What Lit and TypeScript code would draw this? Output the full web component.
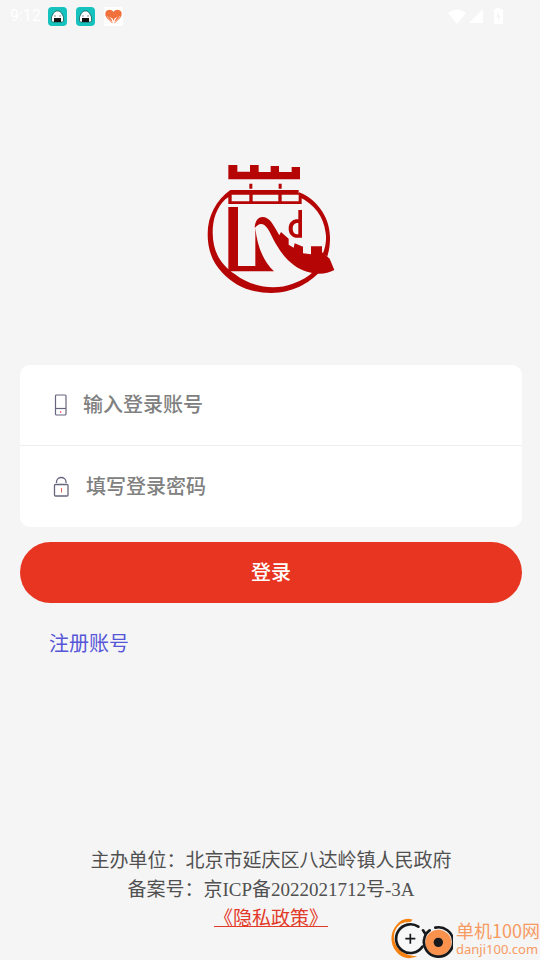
import { LitElement, html, css, svg } from "lit";
import { customElement } from "lit/decorators.js";

const riceBall = svg`
  <rect width="19" height="19" rx="4" fill="#16c2bd"/>
  <path d="M3.500 14V10L5.500 6 8 4H11L13.500 6 15.500 10V14L14.500 15H4.500Z" fill="#fff" stroke="#1c5a59" stroke-width=".8"/>
  <path d="M6 11H13V15H6Z" fill="#111"/>
  <path d="M6.500 8.500h1v1h-1zM11.500 8.500h1v1h-1z" fill="#222"/>`;

@customElement("status-bar")
class StatusBar extends LitElement {
  static styles = css`
    :host {
      display: flex;
      align-items: center;
      gap: 9px;
      height: 32px;
      padding: 0 34px 0 10px;
      color: #fff;
      font: 16px/20px Roboto, "Noto Sans", sans-serif;
    }
    .time { width: 29px; white-space: nowrap; }
    .space { flex: 1; }
    svg { display: block; flex: none; }
  `;
  render() {
    return html`
      <span class="time">9:12</span>
      <svg width="19" height="19" viewBox="0 0 19 19">${riceBall}</svg>
      <svg width="19" height="19" viewBox="0 0 19 19">${riceBall}</svg>
      <svg width="19" height="19" viewBox="0 0 19 19">
        <rect width="19" height="19" rx="2" fill="#fff"/>
        <path d="M9.500 5C8 2 2.500 2 1.500 5.500C.7 9 3 11.500 5 13L8.500 16.500C8.500 13 7 11 5 9.500L8.500 11.500 9.500 14 10.500 11.500 14 9.500C12 11 10.500 13 10.500 16.500L14 13C16 11.500 18.300 9 17.500 5.500C16.500 2 11 2 9.500 5Z" fill="#f2703c"/>
        <path d="M3 9C4 12 7 12.500 8 15.500M16 9C15 12 12 12.500 11 15.500" fill="none" stroke="#fbd3bf" stroke-width=".8"/>
      </svg>
      <span class="space"></span>
      <svg width="58" height="19" viewBox="0 0 58 19" fill="#fff">
        <path d="M0 6Q9-1 18 6L9 17Z"/>
        <path d="M21 16 35 2V16Z"/>
        <path fill-rule="evenodd" d="M46 2H48V1H52V2H55V17H46ZM51 5 48 10H50V14L53 9H51Z"/>
      </svg>`;
  }
}

@customElement("brand-logo")
class BrandLogo extends LitElement {
  static styles = css`
    :host { display: block; }
    svg { display: block; width: 144px; height: 144px; }
  `;
  render() {
    return html`
      <svg viewBox="-3 0 432 432" fill="#b50505" role="img" aria-label="Logo">
        <path d="M85 27H112V47H150V27H176V48H212V30H237V48H275V33H300V70H85Z"/>
        <path d="M148 83H157V98H148ZM236 83H245V98H236Z"/>
        <path fill-rule="evenodd" d="M91 102H296V112L305 115V144H85V124L76 130C50 155 38 190 38 230C39 290 62 325 105 355C155 394 225 404 278 383C304 374 325 362 340 347L358 349C327 382 277 411 214 411C150 411 100 386 67 350C35 317 23 278 23 235C23 178 49 133 91 102ZM95 116V136H148V116ZM158 116V136H235V116ZM245 116V136H296V116Z"/>
        <path d="M297 109C346 127 390 180 390 244C390 269 387 286 382 301L368 294C377 271 380 252 377 231C371 180 342 144 297 123Z"/>
        <path d="M85 153H114V330H166V216C171 265 187 313 222 346H85Z"/>
        <path d="M164 216C165 196 173 183 188 183C207 183 218 202 234 231L238 238 243 228 266 248V266L281 275 284 262 309 272V292L333 295V271H366V289L381 301 389 308 403 342C380 355 349 356 321 347C285 337 253 307 232 271C217 248 208 218 193 207C182 200 172 206 164 216Z"/>
        <path fill-rule="evenodd" d="M295 162H306V245H287C273 242 266 231 266 218C266 203 275 192 288 190H295ZM295 201H290C281 203 278 209 278 218C278 227 282 233 290 235H295Z"/>
      </svg>`;
  }
}

@customElement("site-mark")
class SiteMark extends LitElement {
  static styles = css`
    :host {
      display: flex;
      align-items: center;
      gap: 3px;
      color: #f79a62;
      white-space: nowrap;
    }
    svg { display: block; width: 66px; height: 44px; }
    .words { display: flex; flex-direction: column; }
    .name { font: 18px/22px "Noto Sans CJK SC", sans-serif; }
    .domain { font: 13px/16px "Noto Sans", sans-serif; }
  `;
  render() {
    return html`
      <svg viewBox="0 0 198 132" fill="none" aria-hidden="true">
        <path d="M77 11C58 4 42 11 29 26C8 50 9 84 27 106C42 126 63 132 91 121C65 119 43 110 32 95C16 72 18 48 33 31C44 18 57 19 70 18Z" fill="#f78212"/>
        <circle cx="70" cy="68" r="42" fill="#f8f8f8"/>
        <path d="M94 32A43 43 0 1 0 106 92" stroke="#17191c" stroke-width="8" stroke-linecap="round"/>
        <path d="M70 53V83M55 68H85" stroke="#17191c" stroke-width="5"/>
        <circle cx="154" cy="80" r="39" fill="#fa924d"/>
        <path d="M145 35A44 44 0 1 1 112 67C114 57 119 49 128 43M108 43 116 55" stroke="#17191c" stroke-width="8" stroke-linecap="round"/>
        <circle cx="154" cy="79" r="14" fill="#17191c"/>
      </svg>
      <span class="words">
        <span class="name">单机100网</span>
        <span class="domain">danji100.com</span>
      </span>`;
  }
}

@customElement("app-root")
class AppRoot extends LitElement {
  static styles = css`
    :host {
      display: flex;
      flex-direction: column;
      position: relative;
      box-sizing: border-box;
      min-height: 100vh;
      background: #f5f5f5;
      font-family: "Liberation Serif", "Noto Sans CJK SC", serif;
      font-size: 20px;
      line-height: 30px;
    }
    .brand {
      display: flex;
      justify-content: center;
      padding: 124px 18px 65px 20px;
    }
    form { display: flex; flex-direction: column; padding: 0 18px 0 20px; }
    .card { background: #fff; border-radius: 10px; }
    .row {
      display: flex;
      align-items: center;
      gap: 14px;
      height: 80px;
      padding: 0 32px;
    }
    .row + .row { padding-top: 1px; border-top: 1px solid #eee; }
    .row svg { display: block; flex: none; }
    input {
      flex: 1;
      min-width: 0;
      padding: 0;
      border: 0;
      outline: 0;
      background: none;
      color: #333;
      font: inherit;
      font-weight: 500;
    }
    input::placeholder { color: #808080; opacity: 1; }
    button {
      height: 61px;
      margin-top: 15px;
      border: 0;
      border-radius: 31px;
      background: #e83522;
      color: #fff;
      font: inherit;
      font-weight: 500;
      cursor: pointer;
    }
    .register {
      align-self: flex-start;
      margin: 26px 0 0 29px;
      color: #5656d8;
      text-decoration: none;
    }
    footer {
      margin-top: auto;
      padding: 32px 18px 27px 20px;
      color: #505050;
      font-size: 19px;
      line-height: 29px;
      text-align: center;
    }
    p { margin: 0; }
    .policy { color: #e23a28; }
    site-mark { position: absolute; right: 0; bottom: 0; }
  `;
  render() {
    return html`
      <status-bar></status-bar>
      <div class="brand"><brand-logo></brand-logo></div>
      <form @submit=${(e: Event) => e.preventDefault()}>
        <div class="card">
          <label class="row">
            <svg width="17" height="24" viewBox="0 0 17 24" fill="none" stroke="#66667f">
              <rect x="3.500" y="2" width="10.500" height="20" rx="1" stroke-width="1.200"/>
              <path d="M3.500 15.500H14" stroke-width="1.200"/>
              <path d="M8.700 18V20" stroke="#f05070"/>
            </svg>
            <input type="text" placeholder="输入登录账号" aria-label="输入登录账号">
          </label>
          <label class="row">
            <svg width="20" height="24" viewBox="0 0 20 24" fill="none" stroke="#66667f">
              <rect x="2.500" y="9.500" width="13.500" height="11.500" rx="1" stroke-width="1.300"/>
              <path d="M4.500 8V7C4.500 1 14 1 14 7V8" stroke-width="1.300"/>
              <path d="M9.500 13V17.500" stroke="#e86060"/>
            </svg>
            <input type="password" placeholder="填写登录密码" aria-label="填写登录密码">
          </label>
        </div>
        <button type="submit">登录</button>
        <a class="register" href="#register">注册账号</a>
      </form>
      <footer>
        <p>主办单位：北京市延庆区八达岭镇人民政府</p>
        <p>备案号：京ICP备2022021712号-3A</p>
        <p><a class="policy" href="#privacy">《隐私政策》</a></p>
      </footer>
      <site-mark></site-mark>`;
  }
}
